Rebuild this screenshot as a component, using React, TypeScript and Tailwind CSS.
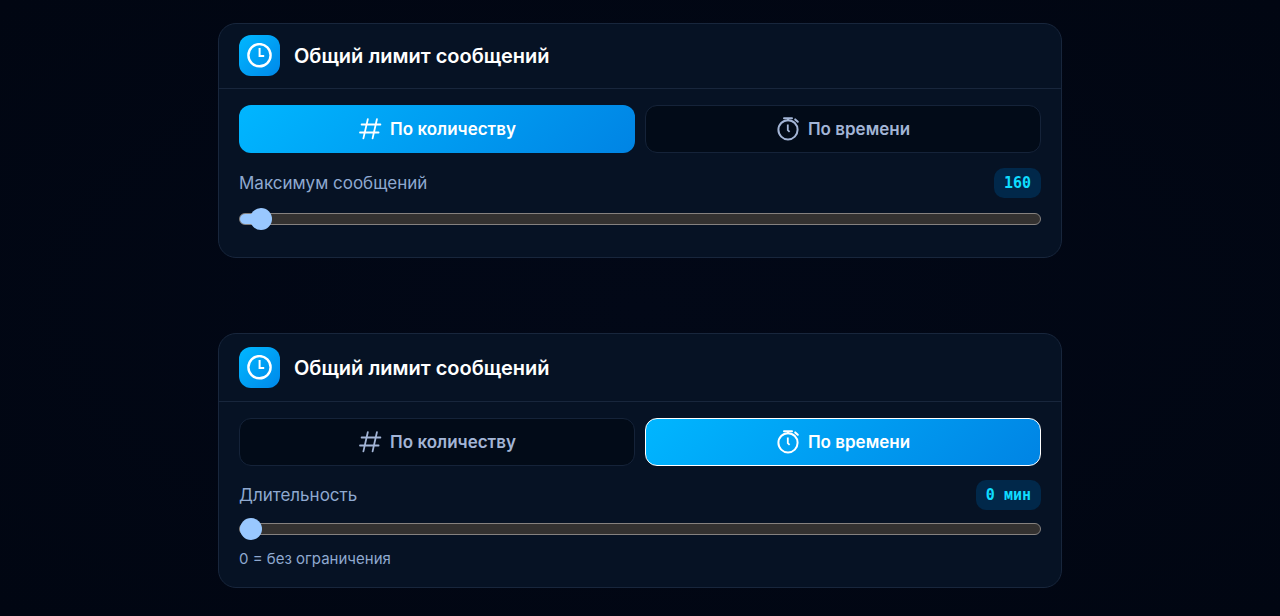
import { useId, useState } from "react";
import type { CSSProperties, ReactNode } from "react";

type Mode = "count" | "time";

function ClockIcon() {
  return (
    <svg viewBox="0 0 25 25" className="size-[25px]" fill="none" stroke="currentColor" strokeWidth="2.4" aria-hidden="true">
      <circle cx="12.5" cy="12.2" r="11.1" />
      <path d="M12.6 5v8.1h4.6" strokeWidth="2" />
    </svg>
  );
}

function HashIcon() {
  return (
    <svg viewBox="0 0 24 24" className="size-6" fill="none" stroke="currentColor" strokeWidth="1.8" strokeLinecap="round" aria-hidden="true">
      <path d="M3.6 7.5H22.4M2 15.5H20.6M9.8 2.2L5.4 21.4M18.9 2.2L14.6 21.4" />
    </svg>
  );
}

function StopwatchIcon() {
  return (
    <svg viewBox="0 0 24 24" className="size-6" fill="none" stroke="currentColor" strokeWidth="2" strokeLinecap="round" strokeLinejoin="round" aria-hidden="true">
      <circle cx="12" cy="12.8" r="9.6" />
      <path d="M8 1.3h8M12 1.3v2M19.2 2.4l2.6 2.4" />
      <path d="M11.8 7.6v5.6l1.8 1.6" strokeWidth="1.8" strokeLinecap="butt" />
    </svg>
  );
}

interface ModeButtonProps {
  active: boolean;
  outlined?: boolean;
  icon: ReactNode;
  onClick: () => void;
  children: ReactNode;
}

function ModeButton({ active, outlined, icon, onClick, children }: ModeButtonProps) {
  const look = active
    ? `bg-[linear-gradient(135deg,#00b6ff,#0084e4)] text-white ${outlined ? "border border-white" : ""}`
    : "border border-[#152339] bg-[#020b18] text-[#a3b5d6]";
  return (
    <button
      type="button"
      aria-pressed={active}
      onClick={onClick}
      className={`flex h-12 items-center justify-center gap-2 rounded-xl text-[17px] leading-6 font-semibold ${look}`}
    >
      {icon}
      {children}
    </button>
  );
}

interface LimitSliderProps {
  label: string;
  unit?: string;
  hint?: string;
  min: number;
  max: number;
  initial: number;
}

function LimitSlider({ label, unit, hint, min, max, initial }: LimitSliderProps) {
  const id = useId();
  const [value, setValue] = useState(initial);
  const fill = { "--fill": `${((value - min) / (max - min)) * 100}%` } as CSSProperties;
  return (
    <div className="flex flex-col">
      <div className="flex items-center justify-between">
        <label htmlFor={id} className="text-[17px] leading-7 text-[#8fa9d0]">
          {label}
        </label>
        <output htmlFor={id} className="rounded-[10px] bg-[#01284a] px-[10px] py-[3px] font-['DejaVu_Sans_Mono',monospace] text-[15px] leading-6 font-bold whitespace-pre text-[#0fdcff]">
          {unit ? `${value} ${unit}` : value}
        </output>
      </div>
      <input
        id={id}
        type="range"
        min={min}
        max={max}
        step={10}
        value={value}
        style={fill}
        onChange={(e) => setValue(Number(e.target.value))}
        className={`${hint ? "mt-2" : "mt-[10px]"} h-[22px] w-full cursor-pointer appearance-none bg-transparent [&::-webkit-slider-runnable-track]:h-3 [&::-webkit-slider-runnable-track]:rounded-full [&::-webkit-slider-runnable-track]:border [&::-webkit-slider-runnable-track]:border-[#85817f] [&::-webkit-slider-runnable-track]:bg-[linear-gradient(to_right,#99c8ff_calc(var(--fill)+4px),#333130_calc(var(--fill)+4px))] [&::-webkit-slider-thumb]:-mt-[6px] [&::-webkit-slider-thumb]:size-[22px] [&::-webkit-slider-thumb]:appearance-none [&::-webkit-slider-thumb]:rounded-full [&::-webkit-slider-thumb]:bg-[#99c8ff]`}
      />
      {hint && <p className="mt-[7px] text-[15px] leading-6 text-[#8fa9d0]">{hint}</p>}
    </div>
  );
}

interface LimitCardProps {
  initialMode: Mode;
}

function LimitCard({ initialMode }: LimitCardProps) {
  const [mode, setMode] = useState<Mode>(initialMode);
  const byTime = mode === "time";
  return (
    <section className="rounded-[18px] border border-[#18263c] bg-[#061224]">
      <header className={`flex items-center gap-[14px] border-b border-[#18263c] px-5 ${byTime ? "py-[13px]" : "pt-[11px] pb-3"}`}>
        <span className="flex size-[41px] items-center justify-center rounded-xl bg-linear-to-br from-[#00b8ff] to-[#0088ea] text-white">
          <ClockIcon />
        </span>
        <h2 className="text-[20px] leading-7 font-semibold text-white">Общий лимит сообщений</h2>
      </header>
      <div className={`flex flex-col px-5 pt-4 ${byTime ? "gap-[14px] pb-4" : "gap-[15px] pb-[27px]"}`}>
        <div className="grid grid-cols-2 gap-[10px]">
          <ModeButton active={!byTime} icon={<HashIcon />} onClick={() => setMode("count")}>
            По количеству
          </ModeButton>
          <ModeButton active={byTime} outlined icon={<StopwatchIcon />} onClick={() => setMode("time")}>
            По времени
          </ModeButton>
        </div>
        {byTime ? (
          <LimitSlider key="time" label="Длительность" unit="мин" hint="0 = без ограничения" min={0} max={1440} initial={0} />
        ) : (
          <LimitSlider key="count" label="Максимум сообщений" min={30} max={10000} initial={160} />
        )}
      </div>
    </section>
  );
}

export default function App() {
  return (
    <main className="min-h-screen bg-[#010612] bg-[radial-gradient(ellipse_at_center,#020817_0%,#010612_100%)] px-4 pt-[23px] pb-7 font-['Inter',sans-serif]">
      <div className="mx-auto flex max-w-[844px] flex-col gap-[75px]">
        <LimitCard initialMode="count" />
        <LimitCard initialMode="time" />
      </div>
    </main>
  );
}
